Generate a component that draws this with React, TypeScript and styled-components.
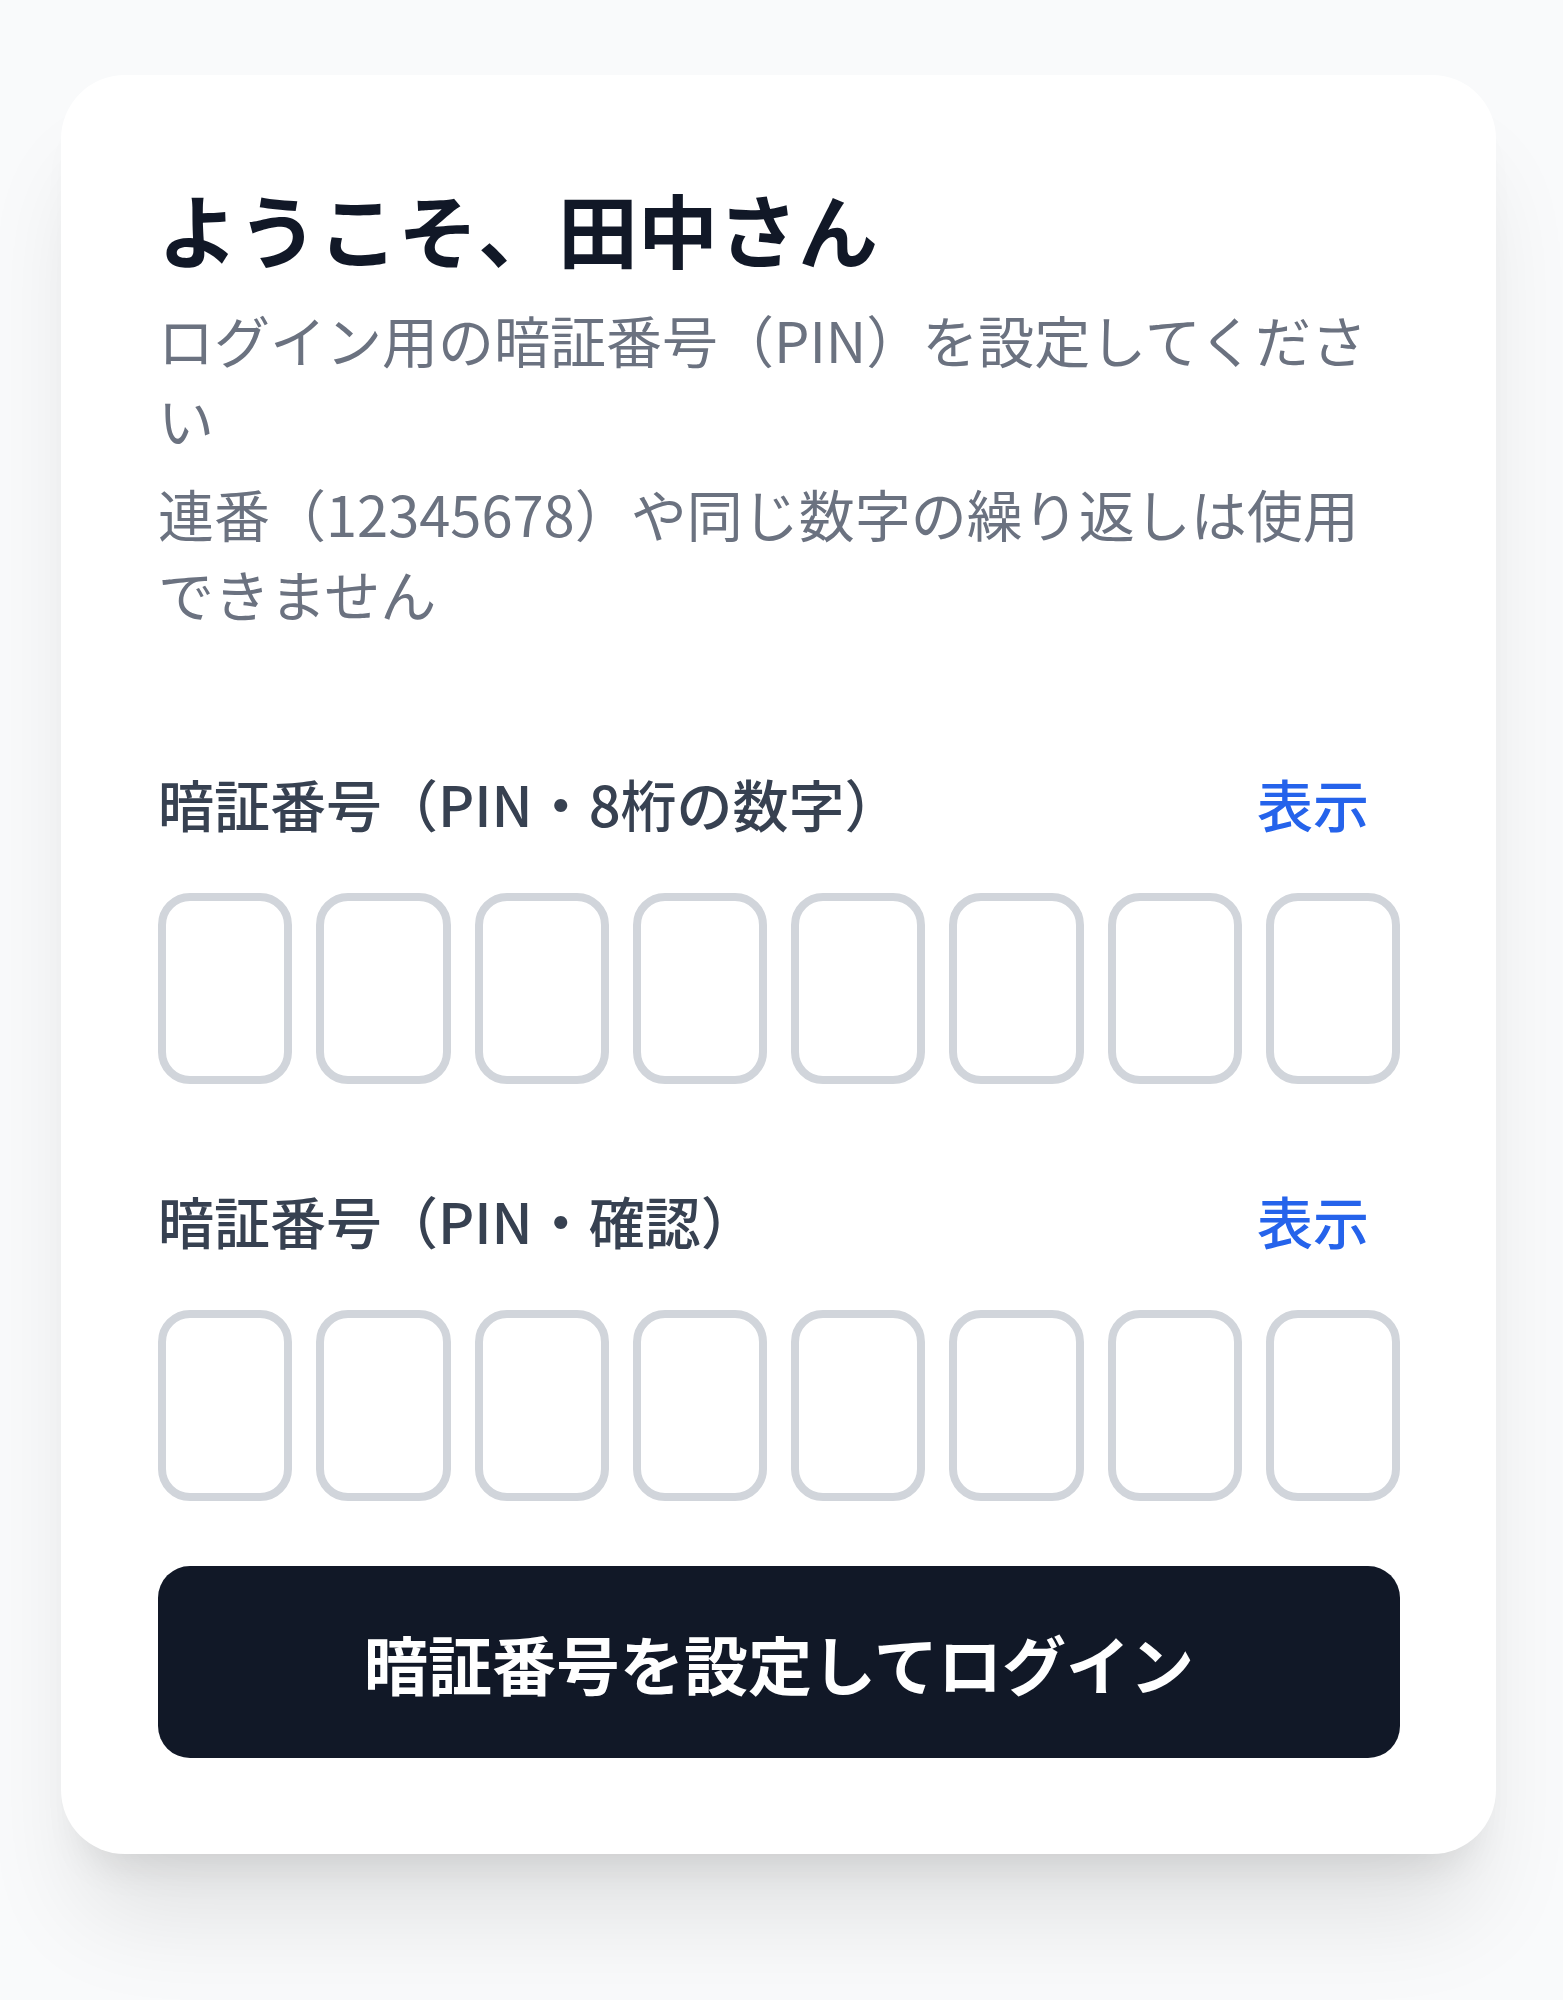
import styled, { createGlobalStyle } from "styled-components";

const GlobalStyle = createGlobalStyle`
  html, body {
    margin: 0;
    padding: 0;
    background: #f9fafb;
  }
  body {
    font-family: "Noto Sans CJK JP", "Noto Sans", sans-serif;
    -webkit-font-smoothing: antialiased;
  }
  * {
    box-sizing: border-box;
  }
`;

const Page = styled.main`
  min-height: 2000px;
  padding: 75px 0 0 61px;
`;

const Card = styled.section`
  width: 1435px;
  background: #ffffff;
  border-radius: 64px;
  padding: 92px 96px 96px 97px;
  box-shadow: 0 80px 100px -20px rgba(0, 0, 0, 0.1),
    0 32px 40px -24px rgba(0, 0, 0, 0.1);
`;

const Title = styled.h1`
  margin: 0 0 12px;
  font-size: 80px;
  line-height: 120px;
  font-weight: 700;
  color: #111827;
`;

const Note = styled.p<{ $gap?: number }>`
  margin: ${({ $gap }) => $gap ?? 0}px 0 0;
  font-size: 56px;
  line-height: 80px;
  font-weight: 400;
  color: #6b7280;
`;

const Fields = styled.div`
  display: flex;
  flex-direction: column;
  gap: 96px;
  margin-top: 130px;
`;

const Field = styled.div`
  display: flex;
  flex-direction: column;
  gap: 50px;
`;

const LabelRow = styled.div`
  display: flex;
  align-items: center;
  justify-content: space-between;
  height: 80px;
`;

const Label = styled.label`
  font-size: 56px;
  line-height: 80px;
  font-weight: 500;
  color: #374151;
`;

const Toggle = styled.button`
  background: none;
  border: none;
  padding: 0 31px 0 0;
  font-family: inherit;
  font-size: 56px;
  line-height: 80px;
  font-weight: 500;
  color: #2563eb;
  cursor: pointer;
`;

const Digits = styled.div`
  display: flex;
  gap: 24px;
`;

const Digit = styled.input`
  flex: 1;
  min-width: 0;
  height: 191px;
  border: 8px solid #d1d5db;
  border-radius: 32px;
  background: #ffffff;
  font-family: inherit;
  font-size: 80px;
  text-align: center;
  color: #111827;
  outline: none;
`;

const Submit = styled.button`
  display: block;
  width: 100%;
  height: 192px;
  margin-top: 65px;
  border: none;
  border-radius: 32px;
  background: #111827;
  color: #ffffff;
  font-family: inherit;
  font-size: 64px;
  font-weight: 700;
  cursor: pointer;
`;

function PinField({ label }: { label: string }) {
  return (
    <Field>
      <LabelRow>
        <Label>{label}</Label>
        <Toggle type="button">表示</Toggle>
      </LabelRow>
      <Digits>
        {Array.from({ length: 8 }, (_, i) => (
          <Digit key={i} type="password" inputMode="numeric" maxLength={1} />
        ))}
      </Digits>
    </Field>
  );
}

export default function App() {
  return (
    <>
      <GlobalStyle />
      <Page>
        <Card>
          <Title>ようこそ、田中さん</Title>
          <Note>ログイン用の暗証番号（PIN）を設定してください</Note>
          <Note $gap={14}>連番（12345678）や同じ数字の繰り返しは使用できません</Note>
          <Fields>
            <PinField label="暗証番号（PIN・8桁の数字）" />
            <PinField label="暗証番号（PIN・確認）" />
          </Fields>
          <Submit type="button">暗証番号を設定してログイン</Submit>
        </Card>
      </Page>
    </>
  );
}
